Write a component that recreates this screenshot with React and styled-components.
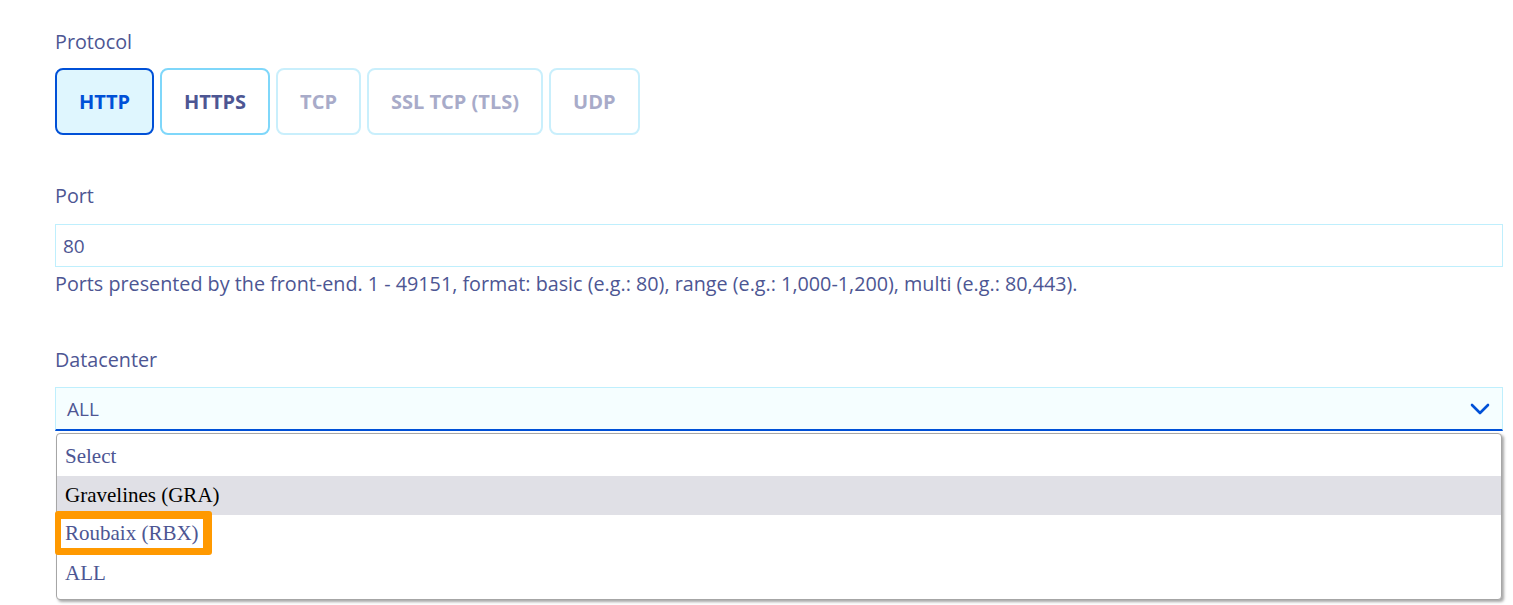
import React from "react";
import styled, { createGlobalStyle } from "styled-components";

const protocols = [
  { label: "HTTP", state: "active" },
  { label: "HTTPS", state: "idle" },
  { label: "TCP", state: "disabled" },
  { label: "SSL TCP (TLS)", state: "disabled" },
  { label: "UDP", state: "disabled" },
];

const options = [
  { label: "Select" },
  { label: "Gravelines (GRA)", hovered: true },
  { label: "Roubaix (RBX)", marked: true },
  { label: "ALL" },
];

export default function App() {
  return (
    <>
      <GlobalStyle />
      <StyledForm>
        <StyledField>
          <StyledLabel $space={14}>Protocol</StyledLabel>
          <StyledTiles>
            {protocols.map((protocol) => (
              <StyledTile key={protocol.label} $state={protocol.state}>
                {protocol.label}
              </StyledTile>
            ))}
          </StyledTiles>
        </StyledField>

        <StyledField $offset={49}>
          <StyledLabel $space={16}>Port</StyledLabel>
          <StyledInput defaultValue="80" />
          <StyledHelp>
            Ports presented by the front-end. 1 - 49151, format: basic (e.g.:
            80), range (e.g.: 1,000-1,200), multi (e.g.: 80,443).
          </StyledHelp>
        </StyledField>

        <StyledField $offset={52}>
          <StyledLabel $space={15}>Datacenter</StyledLabel>
          <StyledSelectWrapper>
            <StyledSelect>
              <span>ALL</span>
              <svg width="20" height="14" viewBox="0 0 20 14">
                <polyline
                  points="2,3 10,11 18,3"
                  fill="none"
                  stroke="#0050d7"
                  strokeWidth="2.6"
                  strokeLinecap="round"
                  strokeLinejoin="round"
                />
              </svg>
            </StyledSelect>
            <StyledMenu>
              {options.map((option) => (
                <StyledOption key={option.label} $hovered={option.hovered}>
                  <StyledOptionText $marked={option.marked}>
                    {option.label}
                  </StyledOptionText>
                </StyledOption>
              ))}
            </StyledMenu>
          </StyledSelectWrapper>
        </StyledField>
      </StyledForm>
    </>
  );
}

const GlobalStyle = createGlobalStyle`
  body {
    margin: 0;
    background: #ffffff;
    font-family: "Open Sans", "Noto Sans", sans-serif;
    color: #4d5693;
  }
`;

const StyledForm = styled.div`
  display: flex;
  flex-direction: column;
  padding: 30px 10px 0 55px;
  height: 605px;
  box-sizing: border-box;
`;

const StyledField = styled.section`
  display: flex;
  flex-direction: column;
  margin-top: ${({ $offset }) => $offset || 0}px;
`;

const StyledLabel = styled.label`
  font-size: 19.75px;
  line-height: 24px;
  margin-bottom: ${({ $space }) => $space}px;
`;

const StyledTiles = styled.div`
  display: flex;
  gap: 6px;
`;

const tileColors = {
  active: { border: "#0050d7", bg: "#dff6fe", text: "#0050d7" },
  idle: { border: "#7fd7fa", bg: "#ffffff", text: "#4d5693" },
  disabled: { border: "#c9effc", bg: "#ffffff", text: "#a8abc9" },
};

const StyledTile = styled.button`
  height: 67px;
  padding: 0 22px;
  border: 2px solid ${({ $state }) => tileColors[$state].border};
  background: ${({ $state }) => tileColors[$state].bg};
  color: ${({ $state }) => tileColors[$state].text};
  border-radius: 8px;
  font-family: "Open Sans", "Noto Sans", sans-serif;
  font-weight: 700;
  font-size: 20px;
`;

const StyledInput = styled.input`
  height: 43px;
  box-sizing: border-box;
  border: 1px solid #bfeffd;
  padding: 0 7px;
  font-family: "Open Sans", "Noto Sans", sans-serif;
  font-size: 19px;
  color: #4d5693;
  outline: none;
`;

const StyledHelp = styled.p`
  margin: 5px 0 0;
  font-size: 19.75px;
  line-height: 24px;
`;

const StyledSelectWrapper = styled.div`
  position: relative;
`;

const StyledSelect = styled.div`
  height: 44px;
  box-sizing: border-box;
  display: flex;
  align-items: center;
  justify-content: space-between;
  padding: 0 12px 0 11px;
  background: #f5feff;
  border: 1px solid #bfeffd;
  border-bottom: 2px solid #0050d7;
  font-size: 19px;
`;

const StyledMenu = styled.div`
  position: absolute;
  top: 46px;
  left: 1px;
  right: 1px;
  background: #ffffff;
  border: 1px solid #a6a6a6;
  border-radius: 4px;
  box-shadow: 2px 2px 3px rgba(0, 0, 0, 0.35);
  padding: 3px 0 6px;
`;

const StyledOption = styled.div`
  height: 39px;
  display: flex;
  align-items: center;
  padding-left: 8px;
  background: ${({ $hovered }) => ($hovered ? "#e0e0e6" : "transparent")};
  color: ${({ $hovered }) => ($hovered ? "#000000" : "#4d5693")};
  font-family: "Liberation Serif", serif;
  font-size: 21px;
`;

const StyledOptionText = styled.span`
  position: relative;
  top: ${({ $marked }) => ($marked ? "-2px" : "0")};
  line-height: 27px;
  padding: ${({ $marked }) => ($marked ? "1px 4px 1px 4px" : "0")};
  margin-left: ${({ $marked }) => ($marked ? "-10px" : "0")};
  border-style: solid;
  border-color: #ff9900;
  border-width: ${({ $marked }) => ($marked ? "8px 9px 7px 6px" : "0")};
  border-radius: 3px;
`;
